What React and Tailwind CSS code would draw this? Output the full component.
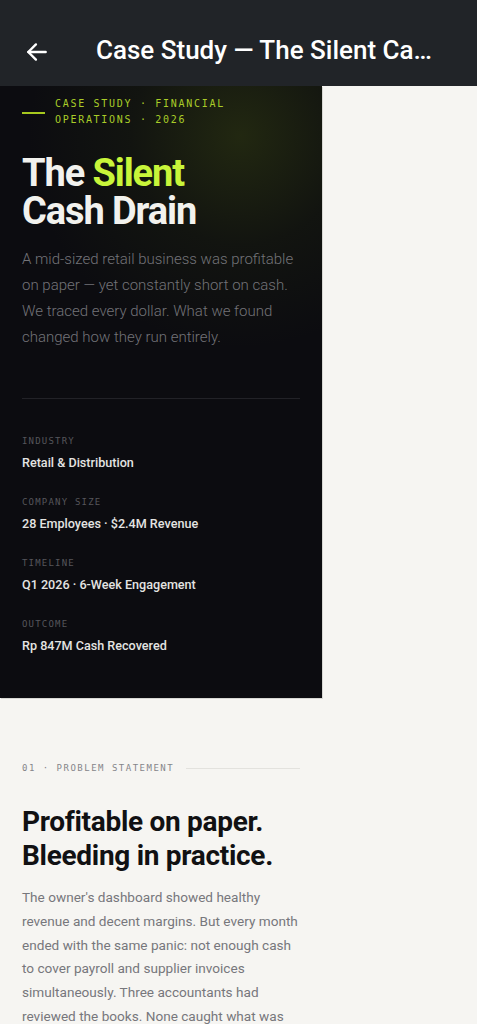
import React from 'react';

const meta = [
  { label: 'INDUSTRY', value: 'Retail & Distribution' },
  { label: 'COMPANY SIZE', value: '28 Employees · $2.4M Revenue' },
  { label: 'TIMELINE', value: 'Q1 2026 · 6-Week Engagement' },
  { label: 'OUTCOME', value: 'Rp 847M Cash Recovered' },
];

const mono = { fontFamily: '"DejaVu Sans Mono", "Liberation Mono", monospace' };

const App = () => {
  return (
    <div className="min-h-[1024px] bg-[#f6f5f2] font-['Roboto',sans-serif]">
      {/* App bar */}
      <div className="h-[86px] bg-[#212428] flex items-end pb-[21px]">
        <button className="w-[74px] pl-[24px] flex items-center text-white">
          <svg width="26" height="26" viewBox="0 0 24 24" fill="none" stroke="currentColor" strokeWidth="2.2" strokeLinecap="round" strokeLinejoin="round">
            <path d="M20 12H4" />
            <path d="M11 5l-7 7 7 7" />
          </svg>
        </button>
        <h1 className="ml-[22px] w-[342px] truncate text-white text-[26px] font-medium leading-[30px]">
          Case Study — The Silent Cash Drain
        </h1>
      </div>

      <div className="w-[322px]">
        {/* Hero */}
        <section className="relative overflow-hidden bg-[#0c0c10] h-[612px] px-[22px] pt-[10px] shadow-[1px_1px_0_#d8d8d4]">
          <div className="absolute -top-[170px] left-[20px] w-[440px] h-[440px] rounded-full bg-[radial-gradient(circle,rgba(120,150,20,0.2)_0%,rgba(70,90,15,0.1)_35%,rgba(0,0,0,0)_68%)]" />
          <div className="relative">
            <div className="flex items-start gap-[10px]">
              <div className="w-[23px] h-[1.5px] bg-[#a6c81e] mt-[16px]" />
              <p style={mono} className="text-[10px] leading-[16px] tracking-[1.7px] text-[#a9cc28]">
                CASE STUDY · FINANCIAL<br />OPERATIONS · 2026
              </p>
            </div>

            <h2 className="mt-[26px] text-[38px] font-bold leading-[38px] tracking-[-1.1px] text-[#f2f2ee]">
              The <span className="text-[#c8f53a]">Silent</span><br />Cash Drain
            </h2>

            <p className="mt-[16px] text-[15px] font-light leading-[26px] text-[#737378]">
              A mid-sized retail business was profitable on paper — yet constantly short on cash. We traced every dollar. What we found changed how they run entirely.
            </p>

            <div className="mt-[48px] h-px bg-[#222227]" />

            <div className="mt-[34px] flex flex-col gap-[23px]">
              {meta.map((m) => (
                <div key={m.label} className="flex flex-col gap-[6px]">
                  <span style={mono} className="text-[9px] leading-[16px] tracking-[1.2px] text-[#56565b]">{m.label}</span>
                  <span className="text-[12.6px] font-medium leading-[16px] text-[#e4e4e2]">{m.value}</span>
                </div>
              ))}
            </div>
          </div>
        </section>

        {/* Problem statement */}
        <section className="px-[22px] pt-[64px]">
          <div className="flex items-center gap-[12px]">
            <span style={mono} className="text-[9px] leading-[12px] tracking-[1.5px] text-[#85858a] whitespace-nowrap">
              01 · PROBLEM STATEMENT
            </span>
            <div className="flex-1 h-px bg-[#e3e2de]" />
          </div>

          <h3 className="mt-[31px] text-[28px] font-bold leading-[34px] tracking-[-0.3px] text-[#111113]">
            Profitable on paper.<br />Bleeding in practice.
          </h3>

          <p className="mt-[13px] text-[13.6px] leading-[23.8px] text-[#77777c]">
            The owner's dashboard showed healthy revenue and decent margins. But every month ended with the same panic: not enough cash to cover payroll and supplier invoices simultaneously. Three accountants had reviewed the books. None caught what was happening.
          </p>
        </section>
      </div>
    </div>
  );
};

export default App;
